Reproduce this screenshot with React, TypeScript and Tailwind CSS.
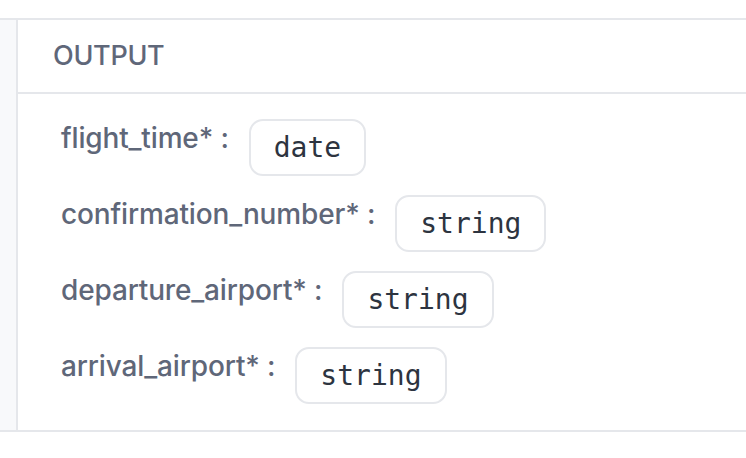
import React from "react";

const fields = [
  { name: "flight_time", type: "date" },
  { name: "confirmation_number", type: "string" },
  { name: "departure_airport", type: "string" },
  { name: "arrival_airport", type: "string" },
];

const App = () => {
  return (
    <main className="w-[746px] h-[458px] bg-white pt-[18px] font-['Inter',sans-serif]">
      <div className="flex border-y-2 border-[#e5e7eb]">
        {/* left gutter */}
        <div className="w-[18px] bg-[#f8f9fb] border-r-2 border-[#e5e7eb]" />
        <div className="flex-1 flex flex-col">
          <div className="h-[74px] flex items-center pl-[35px] border-b-2 border-[#e5e7eb]">
            <h2 className="text-[27px] font-medium tracking-[-0.3px] text-[#5f6779]">
              OUTPUT
            </h2>
          </div>
          <div className="flex flex-col gap-[19px] pl-[43px] pt-[25px] pb-[26px]">
            {fields.map((f) => (
              <div key={f.name} className="flex items-start gap-[20px]">
                <span className="pt-[3px] text-[28px] leading-[32px] font-medium tracking-[-0.15px] text-[#5f6779]">
                  {f.name}* :
                </span>
                <span className="h-[57px] px-[23px] flex items-center rounded-[14px] border-2 border-[#e5e7eb] font-['DejaVu_Sans_Mono',monospace] text-[28px] text-[#2d3440]">
                  {f.type}
                </span>
              </div>
            ))}
          </div>
        </div>
      </div>
    </main>
  );
};

export default App;
